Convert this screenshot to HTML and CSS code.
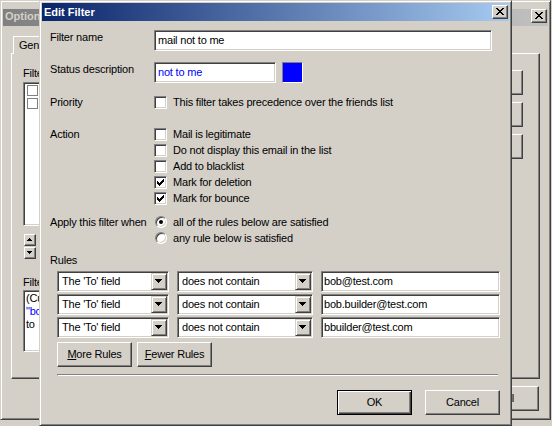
FILE: index.html
```html
<!DOCTYPE html>
<html>
<head>
<meta charset="utf-8">
<title>Edit Filter</title>
<link rel="stylesheet" href="styles.css">
</head>
<body>
<div class="win opts">
  <div class="titlebar">
    <span class="title">Options</span>
    <span class="xbtn raised"><svg width="8" height="7" viewBox="0 0 8 7" shape-rendering="crispEdges"><path d="M0 0h2v1h-2zM6 0h2v1h-2zM1 1h2v1h-2zM5 1h2v1h-2zM2 2h4v1h-4zM3 3h2v1h-2zM2 4h4v1h-4zM1 5h2v1h-2zM5 5h2v1h-2zM0 6h2v1h-2zM6 6h2v1h-2z" fill="#000"/></svg></span>
  </div>
  <div class="tabs">
    <div class="tab-strip">
      <div class="tab sel">General</div>
      <div class="tab">Advanced</div>
    </div>
    <div class="tab-panel">
      <div class="pcol">
        <div class="plabel">Filters:</div>
        <div class="listbox sunken">
          <div class="li"><span class="flatcb"></span></div>
          <div class="li"><span class="flatcb"></span></div>
        </div>
        <div class="updown">
          <span class="ud raised"><svg width="5" height="3" viewBox="0 0 5 3" shape-rendering="crispEdges"><path d="M2 0h1v1h1v1h1v1H0V2h1V1h1z" fill="#000"/></svg></span>
          <span class="ud raised"><svg width="5" height="3" viewBox="0 0 5 3" shape-rendering="crispEdges"><path d="M0 0h5v1h-1v1h-1v1h-1v-1h-1v-1h-1z" fill="#000"/></svg></span>
        </div>
        <div class="plabel desc-label">Filter description:</div>
        <div class="descbox sunken">
          <div>(Custom)</div>
          <div class="blue">"bob"</div>
          <div>to</div>
        </div>
      </div>
      <div class="pcol pbtns">
        <div class="btn raised">New...</div>
        <div class="btn raised">Edit...</div>
        <div class="btn raised">Delete</div>
      </div>
    </div>
  </div>
  <div class="opt-footer">
    <div class="btn raised">OK</div>
    <div class="btn raised opt-cancel">Cancel</div>
  </div>
</div>

<div class="win dlg">
  <div class="titlebar">
    <span class="title">Edit Filter</span>
    <span class="xbtn raised"><svg width="8" height="7" viewBox="0 0 8 7" shape-rendering="crispEdges"><path d="M0 0h2v1h-2zM6 0h2v1h-2zM1 1h2v1h-2zM5 1h2v1h-2zM2 2h4v1h-4zM3 3h2v1h-2zM2 4h4v1h-4zM1 5h2v1h-2zM5 5h2v1h-2zM0 6h2v1h-2zM6 6h2v1h-2z" fill="#000"/></svg></span>
  </div>
  <div class="dlg-body">
    <div class="frow">
      <div class="flabel">Filter name</div>
      <div class="field sunken w-name">mail not to me</div>
    </div>
    <div class="frow r-status">
      <div class="flabel">Status description</div>
      <div class="fctl">
        <div class="field sunken w-status blue">not to me</div>
        <div class="swatch"></div>
      </div>
    </div>
    <div class="frow r-prio">
      <div class="flabel">Priority</div>
      <div class="checks">
        <div class="chk"><span class="cb sunken"></span><span>This filter takes precedence over the friends list</span></div>
      </div>
    </div>
    <div class="frow r-action">
      <div class="flabel">Action</div>
      <div class="checks">
        <div class="chk"><span class="cb sunken"></span><span>Mail is legitimate</span></div>
        <div class="chk"><span class="cb sunken"></span><span>Do not display this email in the list</span></div>
        <div class="chk"><span class="cb sunken"></span><span>Add to blacklist</span></div>
        <div class="chk"><span class="cb sunken"><svg width="7" height="7" viewBox="0 0 7 7" shape-rendering="crispEdges"><path d="M0 2H1V3H2V4H3V3H4V2H5V1H6V0H7V3H6V4H5V5H4V6H3V7H2V6H1V5H0Z" fill="#000"/></svg></span><span>Mark for deletion</span></div>
        <div class="chk"><span class="cb sunken"><svg width="7" height="7" viewBox="0 0 7 7" shape-rendering="crispEdges"><path d="M0 2H1V3H2V4H3V3H4V2H5V1H6V0H7V3H6V4H5V5H4V6H3V7H2V6H1V5H0Z" fill="#000"/></svg></span><span>Mark for bounce</span></div>
      </div>
    </div>
    <div class="frow r-apply">
      <div class="flabel">Apply this filter when</div>
      <div class="checks">
        <div class="chk"><span class="rb on"></span><span>all of the rules below are satisfied</span></div>
        <div class="chk"><span class="rb"></span><span>any rule below is satisfied</span></div>
      </div>
    </div>
    <div class="flabel rules-label">Rules</div>
    <div class="rules">
      <div class="combo sunken"><span class="val">The 'To' field</span><span class="dd"><svg width="7" height="4" viewBox="0 0 7 4" shape-rendering="crispEdges"><path d="M0 0H7V1H6V2H5V3H4V4H3V3H2V2H1V1H0Z" fill="#000"/></svg></span></div>
      <div class="combo sunken"><span class="val">does not contain</span><span class="dd"><svg width="7" height="4" viewBox="0 0 7 4" shape-rendering="crispEdges"><path d="M0 0H7V1H6V2H5V3H4V4H3V3H2V2H1V1H0Z" fill="#000"/></svg></span></div>
      <div class="rfield sunken">bob@test.com</div>
      <div class="combo sunken"><span class="val">The 'To' field</span><span class="dd"><svg width="7" height="4" viewBox="0 0 7 4" shape-rendering="crispEdges"><path d="M0 0H7V1H6V2H5V3H4V4H3V3H2V2H1V1H0Z" fill="#000"/></svg></span></div>
      <div class="combo sunken"><span class="val">does not contain</span><span class="dd"><svg width="7" height="4" viewBox="0 0 7 4" shape-rendering="crispEdges"><path d="M0 0H7V1H6V2H5V3H4V4H3V3H2V2H1V1H0Z" fill="#000"/></svg></span></div>
      <div class="rfield sunken">bob.builder@test.com</div>
      <div class="combo sunken"><span class="val">The 'To' field</span><span class="dd"><svg width="7" height="4" viewBox="0 0 7 4" shape-rendering="crispEdges"><path d="M0 0H7V1H6V2H5V3H4V4H3V3H2V2H1V1H0Z" fill="#000"/></svg></span></div>
      <div class="combo sunken"><span class="val">does not contain</span><span class="dd"><svg width="7" height="4" viewBox="0 0 7 4" shape-rendering="crispEdges"><path d="M0 0H7V1H6V2H5V3H4V4H3V3H2V2H1V1H0Z" fill="#000"/></svg></span></div>
      <div class="rfield sunken">bbuilder@test.com</div>
    </div>
    <div class="rule-btns">
      <div class="btn raised"><u>M</u>ore Rules</div>
      <div class="btn raised"><u>F</u>ewer Rules</div>
    </div>
    <div class="sep"></div>
    <div class="dlg-btns">
      <div class="btn default">OK</div>
      <div class="btn raised">Cancel</div>
    </div>
  </div>
</div>
</body>
</html>
```

FILE: styles.css
```css
* { box-sizing: border-box; }
html, body { margin: 0; padding: 0; }
body {
  width: 552px;
  height: 426px;
  overflow: hidden;
  position: relative;
  background: #d4d0c8;
  font-family: "Liberation Sans", Arial, sans-serif;
  font-size: 11px;
  line-height: 14px;
  letter-spacing: -0.2px;
  color: #000;
}

/* bevels */
.raised {
  background: #d4d0c8;
  border: 1px solid;
  border-color: #fff #404040 #404040 #fff;
  box-shadow: inset -1px -1px #808080;
}
.sunken {
  background: #fff;
  border: 1px solid;
  border-color: #808080 #fff #fff #808080;
  box-shadow: inset 1px 1px #404040, inset -1px -1px #d4d0c8;
}
.blue { color: #0000ff; }

/* windows */
.win {
  position: absolute;
  display: flex;
  flex-direction: column;
  background: #d4d0c8;
  border: 1px solid;
  border-color: #d4d0c8 #404040 #404040 #d4d0c8;
  box-shadow: inset 1px 1px #fff, inset -1px -1px #808080;
}
.opts { z-index: 0; left: 0; top: 0; width: 551px; height: 420px; padding: 8px 2px 2px 2px; }
.dlg { z-index: 1; left: 39px; top: 0; width: 473px; height: 426px; padding: 2px; }

.titlebar {
  flex: none;
  display: flex;
  align-items: flex-start;
  justify-content: space-between;
}
.dlg .titlebar { height: 18px; background: linear-gradient(to right, #0a246a, #a6caf0); }
.opts .titlebar { height: 17px; background: linear-gradient(to right, #808080, #c0c0c0); }
.title {
  font-weight: bold;
  letter-spacing: 0;
  color: #fff;
  padding-left: 2px;
  line-height: 18px;
  white-space: nowrap;
}
.opts .title { color: #d4d0c8; line-height: 15px; }
.xbtn {
  flex: none;
  display: block;
  width: 16px;
  height: 14px;
  margin: 2px 1px 0 0;
}
.opts .xbtn { margin: 0 1px 0 0; }
.xbtn svg { display: block; margin: 2px 0 0 3px; }

/* buttons */
.btn {
  flex: none;
  width: 75px;
  height: 25px;
  line-height: 23px;
  text-align: center;
  white-space: nowrap;
}
.btn.default {
  background: #d4d0c8;
  border: 1px solid #000;
  box-shadow: inset 1px 1px #fff, inset -1px -1px #404040, inset -2px -2px #808080;
}

/* ---- Options window (behind) ---- */
.tabs { margin: 10px 8px 0 8px; }
.tab-strip {
  display: flex;
  align-items: flex-end;
  height: 18px;
  padding-left: 2px;
  margin-bottom: -1px;
}
.tab {
  height: 15px;
  padding: 0 5px;
  background: #d4d0c8;
  border: 1px solid;
  border-bottom: none;
  border-color: #fff #404040 #fff #fff;
  box-shadow: inset -1px 0 #808080;
  white-space: nowrap;
}
.tab.sel { height: 18px; padding-top: 1px; position: relative; z-index: 1; }
.tab-panel {
  height: 326px;
  display: flex;
  justify-content: space-between;
  padding: 12px 16px 0 11px;
  background: #d4d0c8;
  border: 1px solid;
  border-color: #fff #404040 #404040 #fff;
  box-shadow: inset -1px -1px #808080;
}
.pcol { display: flex; flex-direction: column; align-items: flex-start; }
.plabel { white-space: nowrap; }
.listbox { margin-top: 2px; width: 300px; height: 144px; padding: 1px; }
.li { height: 13px; line-height: 13px; display: flex; align-items: flex-start; gap: 4px; padding-left: 2px; white-space: nowrap; }
.flatcb { flex: none; width: 11px; height: 11px; margin-top: 1px; border: 1px solid #808080; background: #fff; }
.updown { margin: 8px 0 0 1px; display: flex; flex-direction: column; gap: 1px; }
.ud { display: block; width: 12px; height: 12px; }
.ud svg { display: block; margin: 3px 0 0 2px; }
.desc-label { margin-top: 16px; }
.descbox { margin-top: 1px; width: 300px; height: 62px; padding: 1px 2px; line-height: 13px; white-space: nowrap; overflow: hidden; }
.pbtns { padding-top: 4px; gap: 7px; }
.opt-footer { margin-top: 7px; display: flex; justify-content: flex-end; gap: 6px; padding-right: 9px; }
.opt-cancel { padding-right: 8px; }

/* ---- Edit Filter dialog ---- */
.dlg-body {
  flex: 1;
  display: flex;
  flex-direction: column;
  align-items: flex-start;
  padding: 9px 0 0 8px;
  overflow: hidden;
}
.frow { display: grid; grid-template-columns: 104px auto; align-items: start; }
.r-status { margin-top: 11px; }
.r-prio { margin-top: 12px; }
.r-action { margin-top: 16px; }
.r-apply { margin-top: 8px; }
.flabel { white-space: nowrap; line-height: 14px; }
.fctl { display: flex; align-items: flex-start; }
.field {
  height: 21px;
  line-height: 17px;
  padding: 1px 3px;
  white-space: nowrap;
  overflow: hidden;
}
.w-name { width: 338px; }
.w-status { width: 122px; }
.swatch {
  flex: none;
  width: 21px;
  height: 21px;
  margin-left: 6px;
  background: #0000ff;
  border: 1px solid;
  border-color: #808080 #fff #fff #808080;
}
.checks { display: flex; flex-direction: column; }
.chk { height: 16px; display: flex; align-items: flex-start; gap: 6px; white-space: nowrap; }
.cb { flex: none; display: block; width: 13px; height: 13px; margin-top: 1px; }
.cb svg { display: block; margin: 2px 0 0 2px; }
.rb {
  flex: none;
  display: block;
  width: 12px;
  height: 12px;
  margin: 1px 0 0 1px;
  border-radius: 50%;
  background: #fff;
  border: 1px solid;
  border-color: #808080 #fff #fff #808080;
  box-shadow: inset 1px 1px #404040, inset -1px -1px #d4d0c8;
}
.rb.on::after {
  content: "";
  display: block;
  width: 4px;
  height: 4px;
  margin: 3px;
  border-radius: 50%;
  background: #000;
}
.rules-label { margin-top: 6px; }
.rules {
  margin: 4px 0 0 7px;
  display: grid;
  grid-template-columns: 112px 136px 179px;
  column-gap: 8px;
  row-gap: 2px;
}
.combo { height: 21px; display: flex; }
.combo .val { flex: 1; padding: 1px 0 0 4px; line-height: 17px; white-space: nowrap; overflow: hidden; }
.combo .dd {
  flex: none;
  display: block;
  width: 16px;
  margin: 1px 1px 1px 0;
  background: #d4d0c8;
  border: 1px solid;
  border-color: #d4d0c8 #404040 #404040 #d4d0c8;
  box-shadow: inset 1px 1px #fff, inset -1px -1px #808080;
}
.dd svg { display: block; margin: 5px 0 0 3px; }
.rfield { height: 21px; line-height: 17px; padding: 1px 2px; white-space: nowrap; overflow: hidden; }
.rule-btns { margin: 4px 0 0 7px; display: flex; gap: 5px; }
.sep {
  margin: 7px 0 0 7px;
  width: 441px;
  height: 2px;
  border-top: 1px solid #808080;
  border-bottom: 1px solid #fff;
  border-left: 1px solid #808080;
}
.dlg-btns {
  align-self: stretch;
  margin-top: 14px;
  display: flex;
  justify-content: flex-end;
  gap: 13px;
  padding-right: 9px;
}
```
